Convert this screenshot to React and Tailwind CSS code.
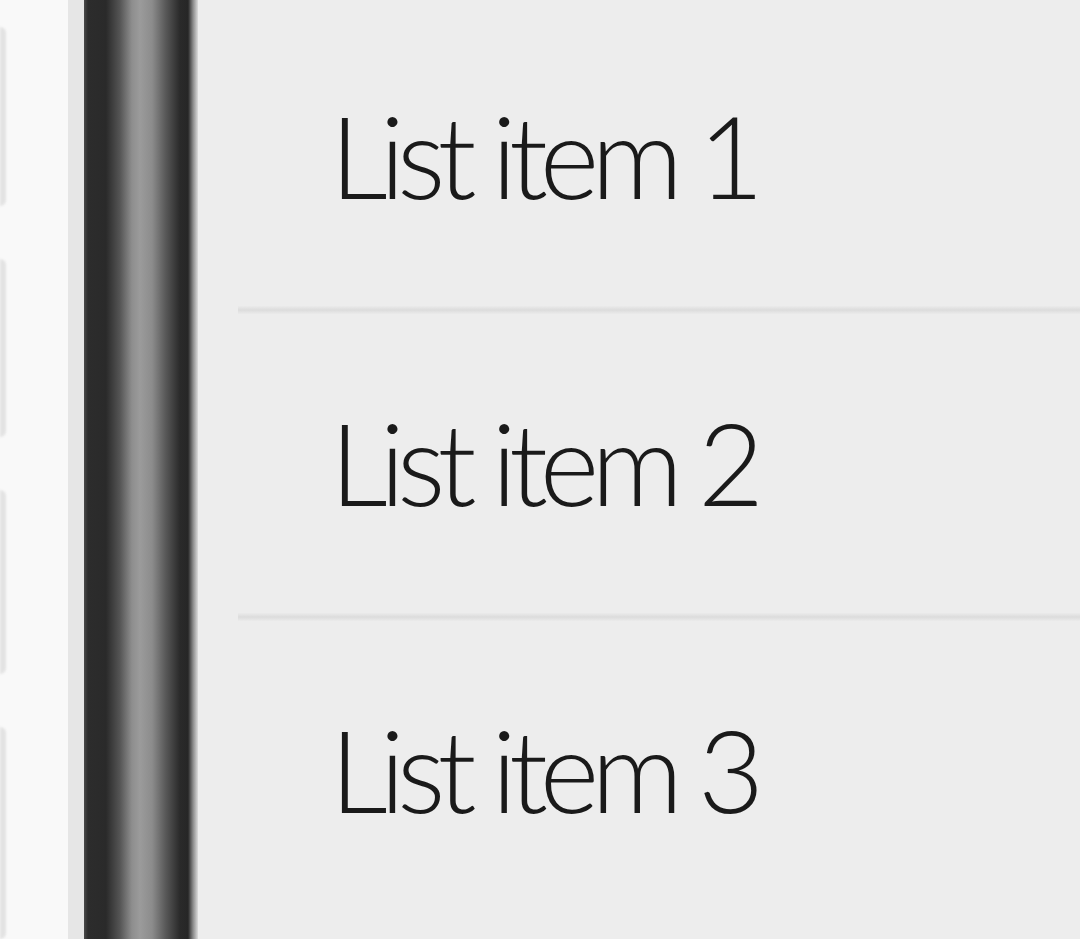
import React from 'react';

const items = ['List item 1', 'List item 2', 'List item 3'];

const App = () => {
  return (
    <div className="flex h-[939px] w-full overflow-hidden bg-[#ededed]">
      {/* left panel edge */}
      <div className="flex w-[68px] shrink-0 flex-col gap-[53px] bg-[#f9f9f9] pt-[27px]">
        <div className="h-[186px] w-[6px] rounded-r-md bg-[#e3e3e3] blur-[1px]" />
        <div className="h-[185px] w-[6px] rounded-r-md bg-[#e3e3e3] blur-[1px]" />
        <div className="h-[192px] w-[6px] rounded-r-md bg-[#e3e3e3] blur-[1px]" />
        <div className="h-[220px] w-[6px] rounded-r-md bg-[#e3e3e3] blur-[1px]" />
      </div>
      <div className="w-[16px] shrink-0 bg-[#e6e6e6]" />

      {/* splitter handle */}
      <div className="w-[114px] shrink-0 bg-[linear-gradient(to_right,#4a4a4a_0px,#2c2c2c_4px,#2a2a2a_22px,#555555_36px,#8e8e8e_48px,#9b9b9b_56px,#8c8c8c_68px,#575757_82px,#2a2a2a_96px,#262626_104px,#8a8a8a_109px,#dcdcdc_114px)]" />

      {/* list */}
      <div className="flex-1 pl-[40px] pt-[7px]">
        <ul>
          {items.map((item, i) => (
            <li key={item}>
              <div className="flex h-[299px] items-center pb-[4px] pl-[92px] font-['Lato',sans-serif] text-[114px] font-light leading-none tracking-[-0.07em] text-[#1a1a1a] blur-[0.6px]">
                {item}
              </div>
              {i < items.length - 1 && (
                <div className="h-[8px] bg-[linear-gradient(to_bottom,#ebebeb,#dcdcdc_50%,#ebebeb)]" />
              )}
            </li>
          ))}
        </ul>
      </div>
    </div>
  );
};

export default App;
